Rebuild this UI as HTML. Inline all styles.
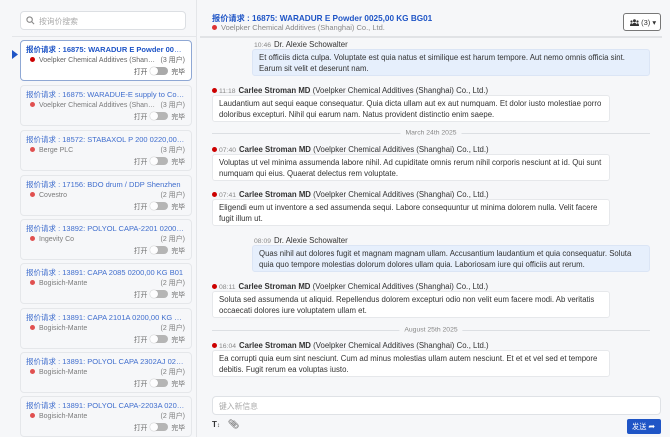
<!DOCTYPE html><html><head><meta charset="utf-8"><style>
*{box-sizing:border-box;margin:0;padding:0}
body{width:670px;height:437px;overflow:hidden;background:#f6f7f9;font-family:"Liberation Sans","Noto Sans CJK SC",sans-serif;color:#333;position:relative;font-size:8px}
.a{position:absolute}
.card{position:absolute;left:20px;width:172px;height:41px;border:1px solid #e3e5e8;border-radius:4px;background:#f7f8fa;padding:4px 6px 0 5px;opacity:.85}
.card.sel{background:#fff;border-color:#8fa8d4;opacity:1}
.t{color:#1f55c6;font-size:7.5px;white-space:nowrap;overflow:hidden;text-overflow:ellipsis;line-height:10px}
.s{color:#666;font-size:7px;margin-top:1px;display:flex;justify-content:space-between;white-space:nowrap;line-height:10px}
.s span:first-child{overflow:hidden;text-overflow:ellipsis;min-width:0}
.s span:last-child{flex-shrink:0;margin-left:4px}
.dot{display:inline-block;width:5px;height:5px;border-radius:50%;background:#d33;margin-right:4px;vertical-align:0}
.sw{position:absolute;right:6px;bottom:4px;font-size:6.8px;color:#555;display:flex;align-items:center;gap:3px}
.tg{width:18px;height:8px;border-radius:4px;background:#aaa;position:relative}
.tg:before{content:"";position:absolute;left:0;top:0;width:8px;height:8px;border-radius:50%;background:#fff;box-shadow:0 0 1px #888}
.hd{position:absolute;left:212px;font-size:7.8px;white-space:nowrap}
.hd .tm{color:#888;font-size:6.8px;margin-right:3px}
.hd b{color:#333}
.box{position:absolute;border-radius:3px;padding:3px 6px;line-height:10.5px;font-size:7.8px;color:#333}
.o{left:212px;width:398px;background:#fff;border:1px solid #e6e8eb}
.m{left:252px;width:398px;background:#e6effc;border:1px solid #dbe5f5}
.div{position:absolute;left:212px;width:438px;height:1px;background:#dcdfe3}
.div span{position:absolute;left:50%;transform:translate(-50%,-50%);background:#f6f7f9;padding:0 5px;color:#888;font-size:6.8px}
</style></head><body>
<div class="a" style="left:196px;top:0;width:1px;height:437px;background:#e4e6e9"></div>
<div class="a" style="left:20px;top:11px;width:166px;height:19px;background:#fff;border:1px solid #dcdfe3;border-radius:4px;color:#aaa;font-size:7.8px;padding:4px 0 0 18px">按询价搜索
<svg class="a" style="left:5px;top:4px" width="9" height="9" viewBox="0 0 10 10"><circle cx="4" cy="4" r="3" fill="none" stroke="#888" stroke-width="1.2"/><path d="M6.3 6.3L9 9" stroke="#888" stroke-width="1.2"/></svg></div>
<div class="a" style="left:12px;top:36px;width:184px;height:1px;background:#e4e6e9"></div>
<svg class="a" style="left:12px;top:50px" width="6" height="9"><path d="M0 0L6 4.5L0 9z" fill="#1f55c6"/></svg>

<div class="card sel" style="top:40px"><div class="t"><b>报价请求 : 16875: WARADUR E Powder 0025,00 KG BG01</b></div><div class="s"><span><span class="dot" style="background:#c00"></span>Voelpker Chemical Additives (Shanghai) Co., Ltd.</span><span>(3 用户)</span></div><div class="sw">打开<span class="tg"></span>完毕</div></div>
<div class="card" style="top:85px"><div class="t">报价请求 : 16875: WARADUE-E supply to Covestro</div><div class="s"><span><span class="dot"></span>Voelpker Chemical Additives (Shanghai) Co., Ltd.</span><span>(3 用户)</span></div><div class="sw">打开<span class="tg"></span>完毕</div></div>
<div class="card" style="top:130px"><div class="t">报价请求 : 18572: STABAXOL P 200 0220,00 KG DR</div><div class="s"><span><span class="dot"></span>Berge PLC</span><span>(3 用户)</span></div><div class="sw">打开<span class="tg"></span>完毕</div></div>
<div class="card" style="top:175px"><div class="t">报价请求 : 17156: BDO drum / DDP Shenzhen</div><div class="s"><span><span class="dot"></span>Covestro</span><span>(2 用户)</span></div><div class="sw">打开<span class="tg"></span>完毕</div></div>
<div class="card" style="top:219px"><div class="t">报价请求 : 13892: POLYOL CAPA-2201 0200,00 KG</div><div class="s"><span><span class="dot"></span>Ingevity Co</span><span>(2 用户)</span></div><div class="sw">打开<span class="tg"></span>完毕</div></div>
<div class="card" style="top:263px"><div class="t">报价请求 : 13891: CAPA 2085 0200,00 KG B01</div><div class="s"><span><span class="dot"></span>Bogisich-Mante</span><span>(2 用户)</span></div><div class="sw">打开<span class="tg"></span>完毕</div></div>
<div class="card" style="top:308px"><div class="t">报价请求 : 13891: CAPA 2101A 0200,00 KG DR01</div><div class="s"><span><span class="dot"></span>Bogisich-Mante</span><span>(2 用户)</span></div><div class="sw">打开<span class="tg"></span>完毕</div></div>
<div class="card" style="top:352px"><div class="t">报价请求 : 13891: POLYOL CAPA 2302AJ 0200,00 KG</div><div class="s"><span><span class="dot"></span>Bogisich-Mante</span><span>(2 用户)</span></div><div class="sw">打开<span class="tg"></span>完毕</div></div>
<div class="card" style="top:396px"><div class="t">报价请求 : 13891: POLYOL CAPA-2203A 0200,00 KG</div><div class="s"><span><span class="dot"></span>Bogisich-Mante</span><span>(2 用户)</span></div><div class="sw">打开<span class="tg"></span>完毕</div></div>

<div class="a" style="left:212px;top:12px;color:#1f55c6;font-size:8.2px;font-weight:bold;white-space:nowrap">报价请求 : 16875: WARADUR E Powder 0025,00 KG BG01</div>
<div class="a" style="left:212px;top:23px;color:#888;font-size:7.5px;white-space:nowrap"><span class="dot"></span>Voelpker Chemical Additives (Shanghai) Co., Ltd.</div>
<div class="a" style="left:623px;top:13px;width:38px;height:18px;border:1px solid #777;border-radius:3px;background:#fff;font-size:7.5px;padding:4px 0 0 6px;color:#333"><svg width="9" height="7" viewBox="0 0 9 7" style="vertical-align:-1px"><circle cx="4.5" cy="1.8" r="1.5" fill="#333"/><circle cx="1.5" cy="2.5" r="1.1" fill="#333"/><circle cx="7.5" cy="2.5" r="1.1" fill="#333"/><path d="M2.2 7Q2.2 3.8 4.5 3.8Q6.8 3.8 6.8 7zM0 7Q0 4.3 1.5 4.3Q2.5 4.3 2.5 7zM6.5 7Q6.5 4.3 7.5 4.3Q9 4.3 9 7z" fill="#333"/></svg> (3) ▾</div>
<div class="a" style="left:200px;top:36px;width:462px;height:2px;background:#e1e3e6"></div>

<div class="hd" style="left:254px;top:40px"><span class="tm">10:46</span>Dr. Alexie Schowalter</div>
<div class="box m" style="top:49px;height:27px">Et officiis dicta culpa. Voluptate est quia natus et similique est harum tempore. Aut nemo omnis officia sint. Earum sit velit et deserunt nam.</div>
<div class="hd" style="top:86px"><span class="dot" style="background:#c00;margin-right:2px"></span><span class="tm">11:18</span><b>Carlee Stroman MD</b> (Voelpker Chemical Additives (Shanghai) Co., Ltd.)</div>
<div class="box o" style="top:95px;height:27px">Laudantium aut sequi eaque consequatur. Quia dicta ullam aut ex aut numquam. Et dolor iusto molestiae porro doloribus excepturi. Nihil qui earum nam. Natus provident distinctio enim saepe.</div>
<div class="div" style="top:133px"><span>March 24th 2025</span></div>
<div class="hd" style="top:145px"><span class="dot" style="background:#c00;margin-right:2px"></span><span class="tm">07:40</span><b>Carlee Stroman MD</b> (Voelpker Chemical Additives (Shanghai) Co., Ltd.)</div>
<div class="box o" style="top:154px;height:27px">Voluptas ut vel minima assumenda labore nihil. Ad cupiditate omnis rerum nihil corporis nesciunt at id. Qui sunt numquam qui eius. Quaerat delectus rem voluptate.</div>
<div class="hd" style="top:190px"><span class="dot" style="background:#c00;margin-right:2px"></span><span class="tm">07:41</span><b>Carlee Stroman MD</b> (Voelpker Chemical Additives (Shanghai) Co., Ltd.)</div>
<div class="box o" style="top:199px;height:27px">Eligendi eum ut inventore a sed assumenda sequi. Labore consequuntur ut minima dolorem nulla. Velit facere fugit illum ut.</div>
<div class="hd" style="left:254px;top:236px"><span class="tm">08:09</span>Dr. Alexie Schowalter</div>
<div class="box m" style="top:245px;height:27px">Quas nihil aut dolores fugit et magnam magnam ullam. Accusantium laudantium et quia consequatur. Soluta quia quo tempore molestias dolorum dolores ullam quia. Laboriosam iure qui officiis aut rerum.</div>
<div class="hd" style="top:282px"><span class="dot" style="background:#c00;margin-right:2px"></span><span class="tm">08:11</span><b>Carlee Stroman MD</b> (Voelpker Chemical Additives (Shanghai) Co., Ltd.)</div>
<div class="box o" style="top:291px;height:27px">Soluta sed assumenda ut aliquid. Repellendus dolorem excepturi odio non velit eum facere modi. Ab veritatis occaecati dolores iure voluptatem ullam et.</div>
<div class="div" style="top:330px"><span>August 25th 2025</span></div>
<div class="hd" style="top:341px"><span class="dot" style="background:#c00;margin-right:2px"></span><span class="tm">16:04</span><b>Carlee Stroman MD</b> (Voelpker Chemical Additives (Shanghai) Co., Ltd.)</div>
<div class="box o" style="top:350px;height:27px">Ea corrupti quia eum sint nesciunt. Cum ad minus molestias ullam autem nesciunt. Et et et vel sed et tempore debitis. Fugit rerum ea voluptas iusto.</div>

<div class="a" style="left:212px;top:396px;width:449px;height:19px;background:#fff;border:1px solid #dfe2e6;border-radius:4px;color:#aaa;font-size:7.8px;padding:4px 0 0 6px">键入新信息</div>
<div class="a" style="left:212px;top:420px;font-weight:bold;font-size:8px;color:#333">T<span style="font-size:6px">↕</span></div>
<div class="a" style="left:228px;top:419px;font-size:9px;color:#444">📎︎</div>
<div class="a" style="left:627px;top:419px;width:34px;height:15px;background:#1f55c6;border-radius:2px;color:#fff;font-size:7.2px;padding:3px 0 0 5px">发送 <span style="font-size:8px">➦</span></div>
</body></html>
